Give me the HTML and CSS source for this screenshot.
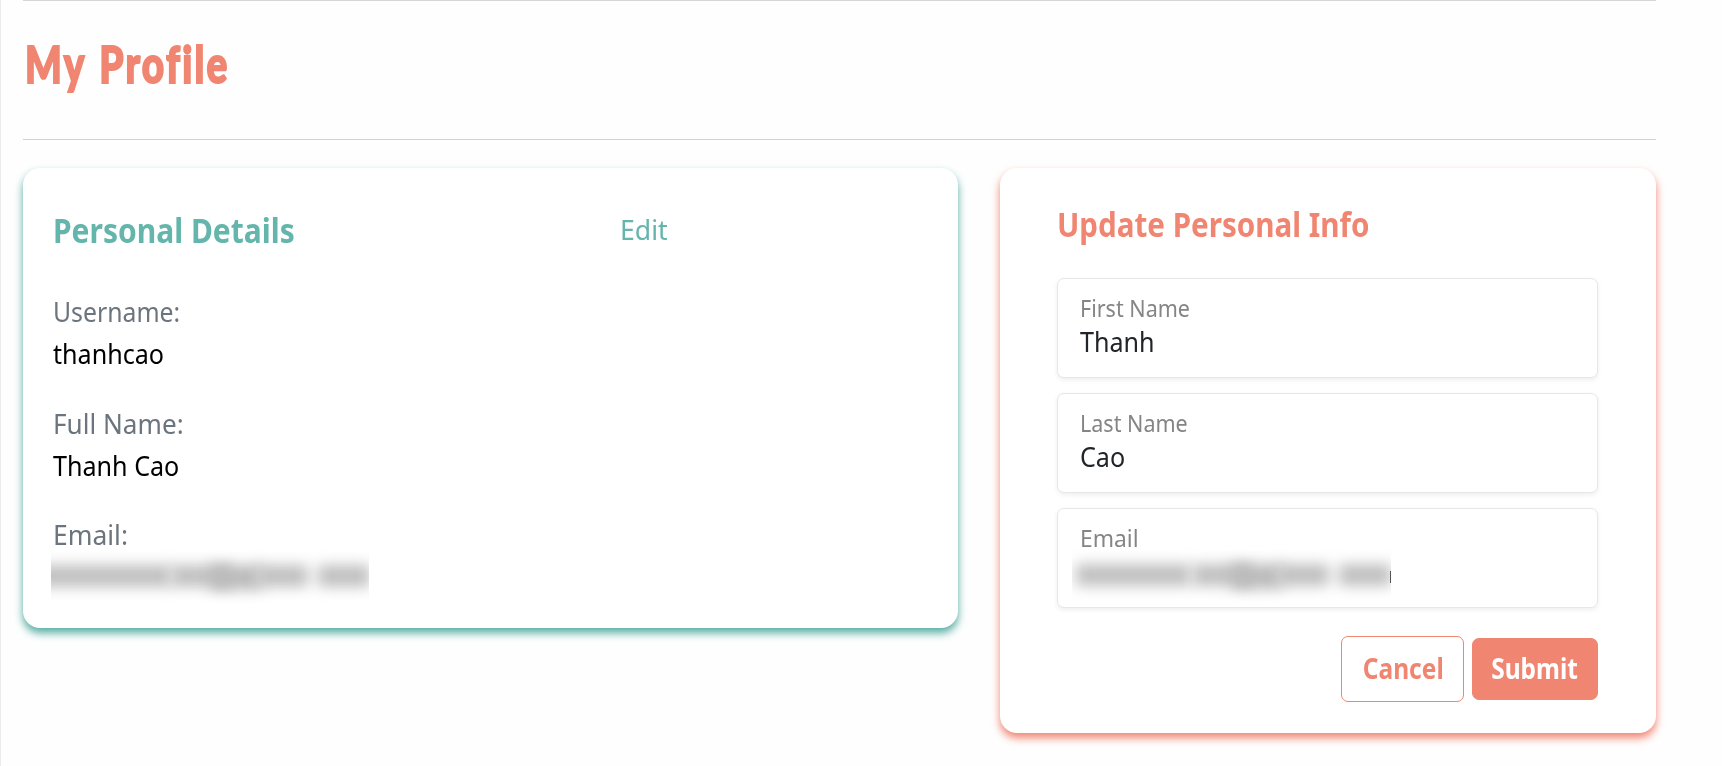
FILE: index.html
```
<!DOCTYPE html>
<html lang="en">
<head>
<meta charset="utf-8">
<title>My Profile</title>
<link rel="stylesheet" href="styles.css">
</head>
<body>
<main class="page">
  <header class="page-header">
    <h1 class="page-title"><span class="t fit-title">My Profile</span></h1>
  </header>
  <div class="columns">
    <section class="card details">
      <div class="details-head">
        <h2 class="card-title"><span class="t fit-details">Personal Details</span></h2>
        <a class="edit"><span class="t fit-edit">Edit</span></a>
      </div>
      <dl class="list">
        <div class="item"><dt><span class="t fit-username">Username:</span></dt><dd><span class="t fit-mid">thanhcao</span></dd></div>
        <div class="item"><dt><span class="t fit-fullname">Full Name:</span></dt><dd><span class="t fit-mid">Thanh Cao</span></dd></div>
        <div class="item"><dt><span class="t fit-email">Email:</span></dt><dd><div class="redacted"><i class="smudge s1"></i><i class="smudge s2"></i><i class="smudge s3"></i><i class="smudge s4"></i></div></dd></div>
      </dl>
    </section>
    <section class="card update">
      <h2 class="card-title"><span class="t fit-update">Update Personal Info</span></h2>
      <form class="form">
        <div class="field"><label><span class="t fit-mid">First Name</span></label><div class="value"><span class="t fit-mid">Thanh</span></div></div>
        <div class="field"><label><span class="t fit-mid">Last Name</span></label><div class="value"><span class="t fit-mid">Cao</span></div></div>
        <div class="field"><label><span class="t fit-label-email">Email</span></label><div class="redacted in-field"><i class="smudge s1"></i><i class="smudge s2"></i><i class="smudge s3"></i><i class="smudge s4"></i><i class="edge"></i></div></div>
      </form>
      <div class="actions">
        <button class="btn cancel" type="button"><span class="t">Cancel</span></button>
        <button class="btn submit" type="button"><span class="t">Submit</span></button>
      </div>
    </section>
  </div>
</main>
</body>
</html>
```
FILE: styles.css
```
* { box-sizing: border-box; }
body {
  margin: 0;
  height: 766px;
  overflow: hidden;
  background: #fefefe;
  color: #000;
  font: 28px/42px "Noto Sans", sans-serif;
}
h1, h2, dl, dd { margin: 0; }

.page {
  height: 766px;
  padding: 0 66px 0 22px;
  border-left: 1px solid #ebebeb;
}
.page-header {
  height: 140px;
  padding: 32px 0 0 2px;
  border-top: 1px solid #d6d6d6;
  border-bottom: 1px solid #d2d2d2;
}
.page-title {
  color: #f08571;
  font: 900 52px/60px Lato, sans-serif;
  letter-spacing: 3px;
  word-spacing: 3px;
  font-variant-ligatures: none;
  -webkit-text-stroke: 2px #f08571;
  stroke-linejoin: round;
}

/* Condensed lettering */
.t {
  display: inline-block;
  white-space: nowrap;
  transform: scaleX(var(--fit, 1));
  transform-origin: 0 50%;
}
.fit-title { --fit: 0.745; }
.fit-details { --fit: 0.882; }
.fit-update { --fit: 0.87; }
.fit-edit { --fit: 0.95; }
.fit-username { --fit: 0.885; }
.fit-fullname { --fit: 0.933; }
.fit-email { --fit: 0.945; }
.fit-mid { --fit: 0.897; }
.fit-label-email { --fit: 0.95; }

.columns {
  display: flex;
  align-items: flex-start;
  justify-content: space-between;
  margin-top: 28px;
}
.card { border-radius: 17px; background: #fff; }
.card-title { font-size: 34px; line-height: 48px; font-weight: 700; }

.details {
  width: 935px;
  height: 460px;
  padding: 38px 29px 0 29.5px;
  box-shadow: 0 5px 8px #55aca1;
}
.details .card-title { color: #64b5ab; }
.details-head { display: grid; grid-template-columns: 567px 1fr; height: 48px; }
.edit { color: #64b5ab; line-height: 46px; }
.list { display: flex; flex-direction: column; gap: 27.5px; margin-top: 36px; }
.item dt { height: 42px; color: #6c757d; }
.item dd { height: 42px; }

/* Hidden address */
.redacted {
  position: relative;
  width: 318px;
  height: 55px;
  margin: -6px 0 0 -1.5px;
  overflow: hidden;
}
.smudge {
  position: absolute;
  top: 16px;
  height: 22px;
  background: #c0c0c0;
  filter: blur(7px);
}
.s1 { left: -12px; width: 132px; }
.s2 { left: 120px; width: 60px; }
.s3 { left: 160px; width: 50px; height: 25px; background: #bbb; }
.s4 { left: 205px; width: 52px; }
.s4 + .edge { position: absolute; right: 0; top: 23px; width: 1px; height: 12px; background: #50555a; }
.s4 { box-shadow: 62px 0 0 #c0c0c0; }

.update {
  width: 656px;
  height: 565px;
  padding: 32px 58px 0 57px;
  box-shadow: 0 5px 8px #f08571;
}
.update .card-title { color: #f08571; }
.form { display: flex; flex-direction: column; gap: 14.5px; margin-top: 30px; }
.field {
  height: 100.3px;
  padding: 14px 21px 0 22px;
  border: 1px solid #e6e7e8;
  border-radius: 7px;
  background: #fff;
  box-shadow: 0 2px 5px rgba(0, 0, 0, .07);
}
.field label { display: block; height: 30px; color: #858585; font-size: 24px; line-height: 30px; }
.value { height: 36px; color: #212529; line-height: 36px; }
.in-field { height: 54px; width: 319px; margin: -5px 0 0 -8px; }
.in-field .s1 { left: 4px; width: 114px; }

.actions {
  display: flex;
  align-items: center;
  justify-content: flex-end;
  gap: 8px;
  margin-top: 28px;
}
.btn {
  padding: 0 0 2px;
  border: 1px solid #f08571;
  border-radius: 7px;
  font: 700 28px/42px "Noto Sans", sans-serif;
}
.btn .t { --fit: 0.875; transform-origin: 50% 50%; margin: 0 -10px; }
.btn.cancel { width: 123px; height: 66px; padding-left: 2px; background: #fff; color: #f08571; }
.submit { width: 126px; height: 62px; background: #f08571; color: #fff; }
```
